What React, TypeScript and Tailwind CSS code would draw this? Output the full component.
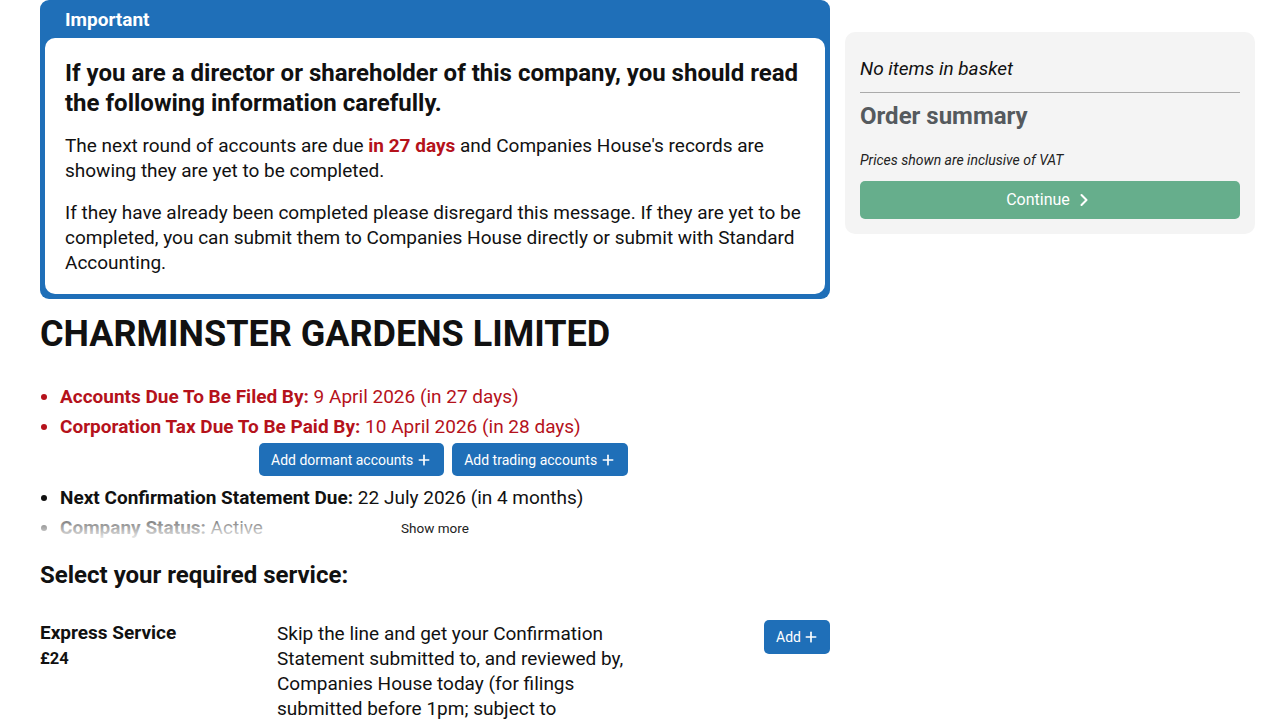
import { ChevronRight, Plus } from "lucide-react";

function BlueButton({ label }: { label: string }) {
  return (
    <button className="flex items-center gap-[3px] rounded-[5px] bg-[#1f6fb8] px-3 h-[33px] text-[14px] text-white">
      {label}
      <Plus className="w-4 h-4" strokeWidth={2.5} />
    </button>
  );
}

export default function App() {
  return (
    <div className="w-[1280px] h-[720px] overflow-hidden bg-white text-[#111] font-['Roboto',sans-serif]">
      <div className="flex items-start gap-[15px] pl-[40px]">
        <main className="w-[790px] shrink-0">
          <section className="rounded-[9px] bg-[#1f6fb8] px-[5px] pb-[5px]">
            <div className="h-[38px] flex items-center pt-[3px] pl-[20px] text-[19px] font-bold text-white">
              Important
            </div>
            <div className="rounded-[10px] bg-white px-[20px] pt-[20px] pb-[19px]">
              <h2 className="text-[24px] leading-[30px] font-bold">
                If you are a director or shareholder of this company, you should
                read the following information carefully.
              </h2>
              <p className="mt-[15px] text-[19px] leading-[25px]">
                The next round of accounts are due{" "}
                <span className="font-bold text-[#b5121b]">in 27 days</span> and
                Companies House's records are showing they are yet to be
                completed.
              </p>
              <p className="mt-[17px] text-[19px] leading-[25px]">
                If they have already been completed please disregard this
                message. If they are yet to be completed, you can submit them to
                Companies House directly or submit with Standard Accounting.
              </p>
            </div>
          </section>

          <h1 className="mt-[15px] text-[36px] leading-[40px] font-bold">
            CHARMINSTER GARDENS LIMITED
          </h1>

          <div className="relative mt-[28px]">
            <ul className="h-[160px] overflow-hidden list-disc pl-[20px] text-[19px] leading-[30px]">
              <li className="text-[#b5121b] marker:text-[#b5121b]">
                <span className="font-bold">Accounts Due To Be Filed By:</span> 9
                April 2026 (in 27 days)
              </li>
              <li className="text-[#b5121b] marker:text-[#b5121b]">
                <span className="font-bold">
                  Corporation Tax Due To Be Paid By:
                </span>{" "}
                10 April 2026 (in 28 days)
              </li>
              <div className="flex gap-2 pl-[199px] mt-[1px] mb-[7px]">
                <BlueButton label="Add dormant accounts" />
                <BlueButton label="Add trading accounts" />
              </div>
              <li>
                <span className="font-bold">Next Confirmation Statement Due:</span>{" "}
                22 July 2026 (in 4 months)
              </li>
              <li>
                <span className="font-bold">Company Status:</span> Active
              </li>
              <li>
                <span className="font-bold">Incorporated On:</span> 1 March 2019
              </li>
            </ul>
            <div className="absolute left-0 right-0 bottom-0 h-[30px] bg-gradient-to-b from-white/25 to-white" />
            <div className="absolute left-0 right-0 bottom-[4px] text-center text-[13.5px] text-[#222]">
              Show more
            </div>
          </div>

          <h3 className="mt-[18px] text-[24px] leading-[30px] font-bold">
            Select your required service:
          </h3>

          <div className="mt-[31px] flex items-start">
            <div className="w-[237px] shrink-0">
              <div className="text-[19px] leading-[24px] font-bold">
                Express Service
              </div>
              <div className="text-[16.5px] leading-[28px] font-bold">£24</div>
            </div>
            <p className="w-[370px] text-[19px] leading-[25px]">
              Skip the line and get your Confirmation Statement submitted to,
              and reviewed by, Companies House today (for filings submitted
              before 1pm; subject to Companies House availability).
            </p>
            <div className="flex-1 flex justify-end -mt-[1px]">
              <button className="flex items-center gap-[2px] rounded-[5px] bg-[#1f6fb8] pl-[12px] pr-[11px] h-[34px] text-[14px] text-white">
                Add
                <Plus className="w-4 h-4" strokeWidth={2.5} />
              </button>
            </div>
          </div>
        </main>

        <aside className="mt-[32px] w-[410px] shrink-0 rounded-[10px] bg-[#f4f4f4] px-[15px] pt-[24px] pb-[15px]">
          <div className="text-[19px] leading-[26px] italic text-[#111]">
            No items in basket
          </div>
          <div className="mt-[10px] border-t border-[#aaa]" />
          <div className="mt-[8px] text-[24px] leading-[30px] font-bold text-[#555a5e]">
            Order summary
          </div>
          <div className="mt-[20px] text-[14px] leading-[18px] italic text-[#222]">
            Prices shown are inclusive of VAT
          </div>
          <button className="mt-[12px] w-full h-[38px] rounded-[5px] bg-[#66ae8c] flex items-center justify-center gap-1 text-[16px] text-white">
            Continue
            <ChevronRight className="w-5 h-5" strokeWidth={2.5} />
          </button>
        </aside>
      </div>
    </div>
  );
}
